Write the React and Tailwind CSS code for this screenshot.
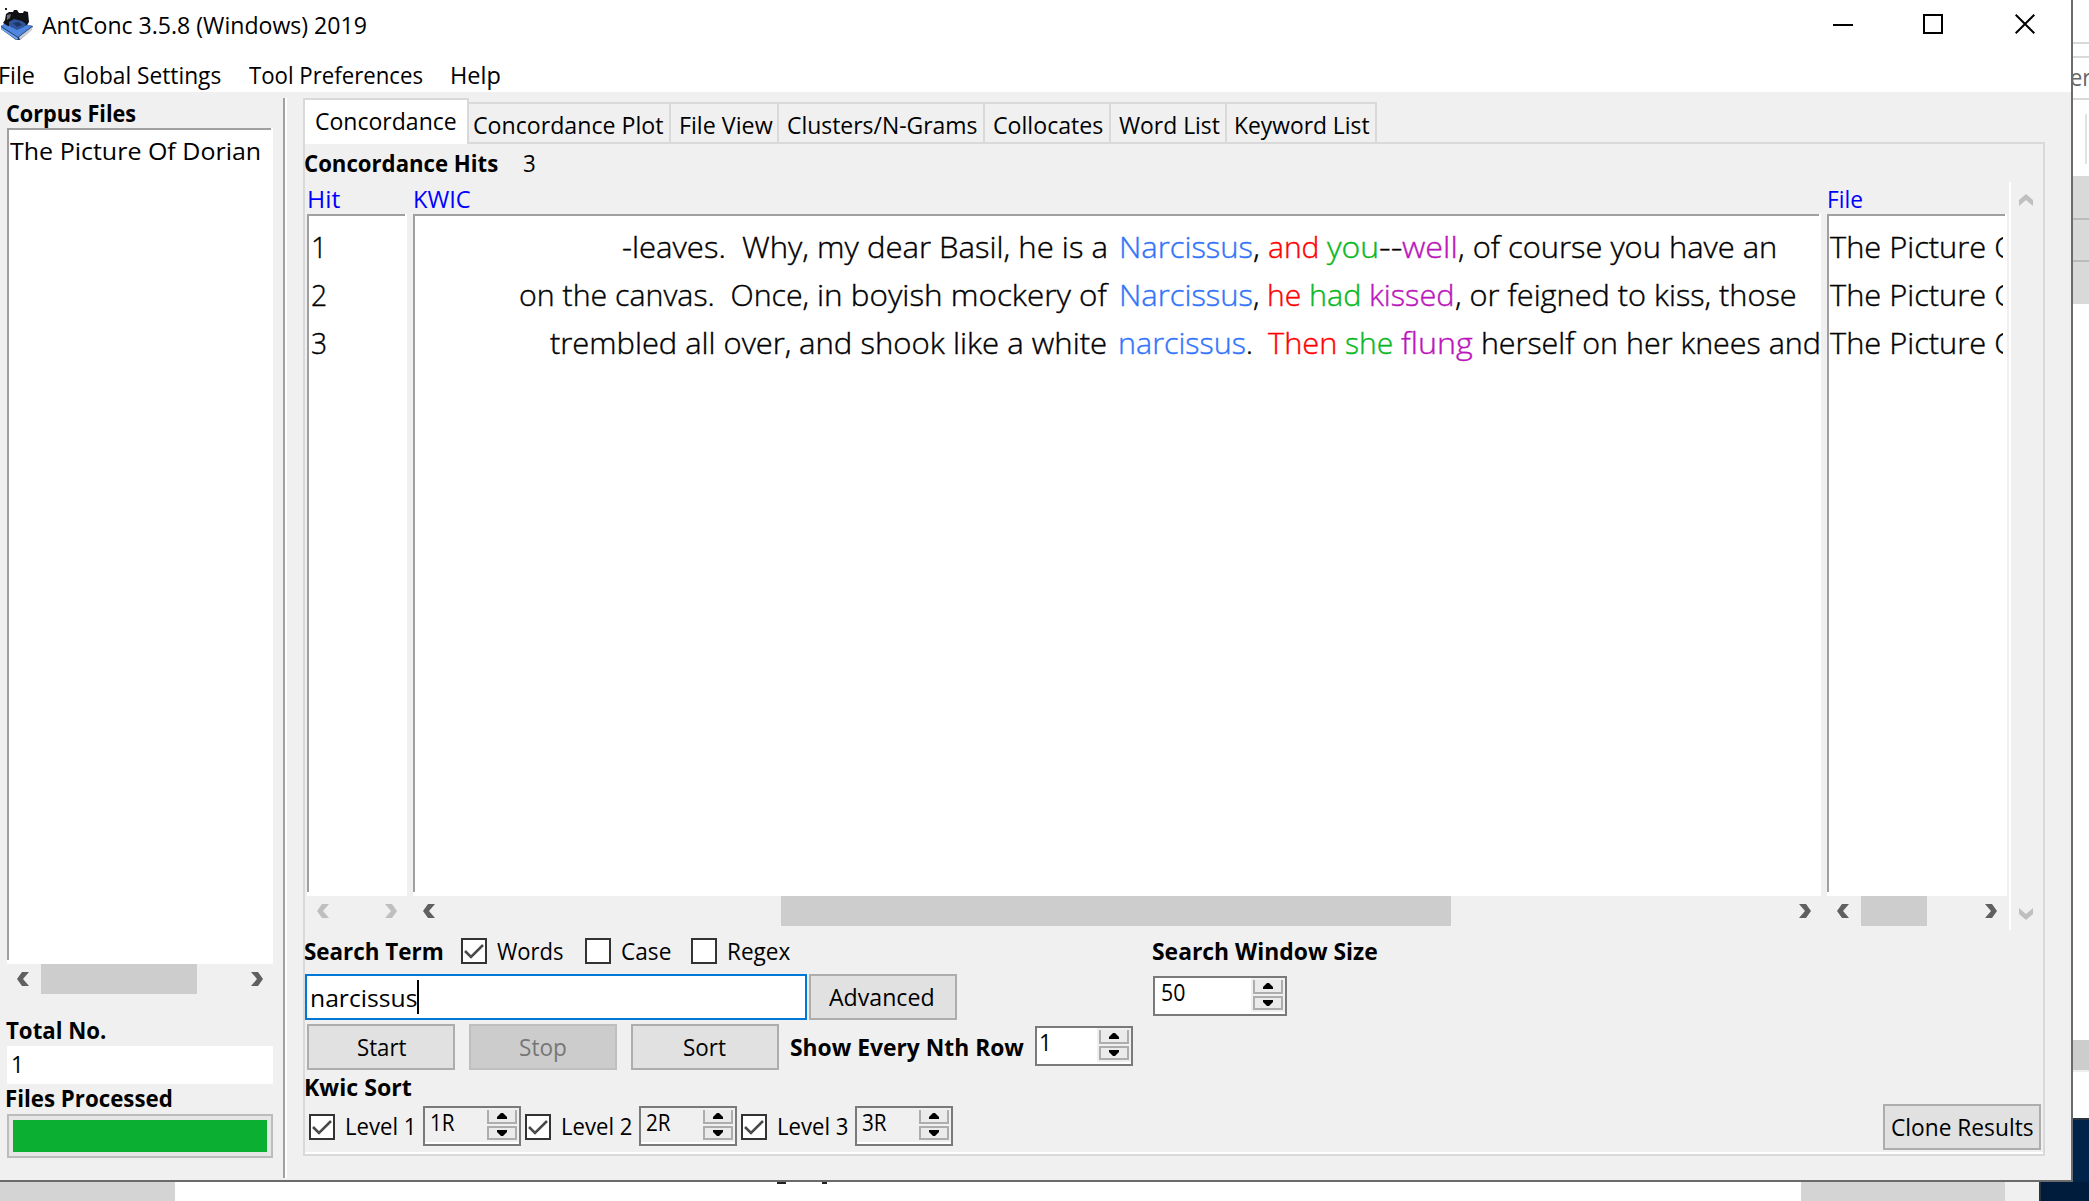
import React, { useLayoutEffect, useRef } from "react";

/* Text that condenses or widens itself to fill the width of its box. */
function Fit({ className = "", children }) {
  const outer = useRef(null);
  const inner = useRef(null);
  useLayoutEffect(() => {
    const o = outer.current.clientWidth;
    const i = inner.current.offsetWidth;
    if (i) inner.current.style.transform = `scaleX(${o / i})`;
  }, []);
  return (
    <span ref={outer} className={`block shrink-0 ${className}`}>
      <span ref={inner} className="inline-block origin-left whitespace-pre align-top">
        {children}
      </span>
    </span>
  );
}

const chevrons = {
  left: [12, 14, "5,0 12,0 6,7 12,14 5,14 0,7"],
  right: [12, 14, "7,0 0,0 6,7 0,14 7,14 12,7"],
  up: [14, 12, "0,6 7,0 14,6 14,12 7,6 0,12"],
  down: [14, 12, "0,6 7,12 14,6 14,0 7,6 0,0"],
};

function Chevron({ dir, off }) {
  const [w, h, points] = chevrons[dir];
  return (
    <svg width={w} height={h} viewBox={`0 0 ${w} ${h}`} className={off ? "shrink-0 fill-[#bfbfbf]" : "shrink-0 fill-[#606060]"}>
      <polygon points={points} />
    </svg>
  );
}

function HScroll({ off, thumb }) {
  return (
    <div className="flex h-[30px] items-center justify-between px-2.5">
      <Chevron dir="left" off={off} />
      {thumb && (
        <div className="flex h-full flex-1 px-3">
          <div className={`h-full bg-[#cdcdcd] ${thumb}`} />
        </div>
      )}
      <Chevron dir="right" off={off} />
    </div>
  );
}

function Sunken({ className = "", children }) {
  return (
    <div className="flex-1 bg-white pb-1 pr-0.5">
      <div className={`h-full overflow-hidden border-l-2 border-t-2 border-[#a0a0a0] ${className}`}>{children}</div>
    </div>
  );
}

function Column({ title, titleWidth, width, off, thumb, children }) {
  return (
    <div className={`flex h-[744px] flex-col ${width}`}>
      <Fit className={`h-8 leading-[34px] text-[#0000ff] ${titleWidth}`}>{title}</Fit>
      <Sunken className="pt-[7px] text-[30px] font-light leading-[48px] [-webkit-text-stroke:0.4px_currentColor]">{children}</Sunken>
      <HScroll off={off} thumb={thumb} />
    </div>
  );
}

function Check({ on, className = "" }) {
  return (
    <div className={`h-[26px] w-[26px] shrink-0 border-2 border-[#333333] bg-white ${className}`}>
      {on && (
        <svg width="22" height="22" viewBox="0 0 22 22">
          <path d="M2 11 L8 17 L20 5" fill="none" stroke="#4a4a4a" strokeWidth="2.6" />
        </svg>
      )}
    </div>
  );
}

function Button({ className = "", text, disabled, children }) {
  const tone = disabled ? "border-[#bfbfbf] bg-[#cccccc] text-[#777777]" : "border-[#adadad] bg-[#e1e1e1]";
  return (
    <div className={`flex h-[46px] shrink-0 items-center justify-center border-2 ${tone} ${className}`}>
      <Fit className={`h-8 leading-8 ${text}`}>{children}</Fit>
    </div>
  );
}

function Spinner({ className = "", text, readOnly, children }) {
  return (
    <div className={`flex h-10 shrink-0 justify-between border-2 border-[#7a7a7a] bg-white ${className}`}>
      <div className={`h-[34px] flex-1 pl-1.5 leading-[28px] ${readOnly ? "bg-[#f0f0f0]" : ""}`}>
        <Fit className={text}>{children}</Fit>
      </div>
      <div className="flex h-[34px] w-[34px] flex-col gap-0.5 bg-[#f0f0f0] px-0.5 pt-0.5">
        <div className="flex h-[14px] w-[30px] items-center justify-center border-2 border-t-0 border-[#adadad] bg-[#ebebeb]">
          <svg width="10" height="6" viewBox="0 0 10 6">
            <polygon points="4,0 6,0 10,4 10,6 0,6 0,4" />
          </svg>
        </div>
        <div className="flex h-[14px] w-[30px] items-center justify-center border-2 border-[#adadad] bg-[#ebebeb]">
          <svg width="10" height="6" viewBox="0 0 10 6">
            <polygon points="4,6 6,6 10,2 10,0 0,0 0,2" />
          </svg>
        </div>
      </div>
    </div>
  );
}

const tabs = [
  ["Concordance Plot", "w-[202px] pl-1", "w-[190px]"],
  ["File View", "w-[108px] pl-[8px]", "w-[94px]"],
  ["Clusters/N-Grams", "w-[206px] pl-[8px]", "w-[190px]"],
  ["Collocates", "w-[126px] pl-[8px]", "w-[110px]"],
  ["Word List", "w-[116px] pl-[8px]", "w-[101px]"],
  ["Keyword List", "w-[150px] pl-[7px]", "w-[136px]"],
];

const blue = "text-[#3374fa]";
const red = "text-[#ff0000]";
const green = "text-[#08b822]";
const purple = "text-[#bb16bb]";

const kwic = [
  {
    indent: "pl-[207px]",
    segments: [
      ["-leaves.  Why, my dear Basil, he is a", "w-[486px] mr-[11px]", ""],
      ["Narcissus", "w-[134px]", blue],
      [", ", "w-[15px]", ""],
      ["and ", "w-[59px]", red],
      ["you", "w-[52px]", green],
      ["--", "w-[23px]", ""],
      ["well", "w-[56px]", purple],
      [", of course you have an", "w-[319px]", ""],
    ],
  },
  {
    indent: "pl-[104px]",
    segments: [
      ["on the canvas.  Once, ", "w-[298px]", ""],
      ["in boyish mockery of", "w-[290px] mr-[12px]", ""],
      ["Narcissus", "w-[134px]", blue],
      [", ", "w-[14px]", ""],
      ["he ", "w-[42px]", red],
      ["had ", "w-[60px]", green],
      ["kissed", "w-[86px]", purple],
      [", or feigned to kiss, those", "w-[342px]", ""],
    ],
  },
  {
    indent: "pl-[135px]",
    segments: [
      ["trembled all over, ", "w-[249px]", ""],
      ["and shook like a white", "w-[308px] mr-[11px]", ""],
      ["narcissus", "w-[128px]", blue],
      [".  ", "w-[22px]", ""],
      ["Then ", "w-[77px]", red],
      ["she ", "w-[56px]", green],
      ["flung", "w-[72px]", purple],
      [" herself on her knees and", "w-[348px]", ""],
    ],
  },
];

function AppIcon() {
  return (
    <svg width="33" height="33" viewBox="0 0 33 33" className="shrink-0">
      <path d="M1 19 L10 14 L33 19 L31 23 L20 33 L16 33 L1 22 Z" fill="#24395e" />
      <path d="M1 19 L11 13 L32 19 L18 30 Z" fill="#4f86e0" />
      <path d="M1 20 L18 31 L17 33 L1 22 Z" fill="#6ea4f4" />
      <path d="M19 30 L32 20 L32 23 L20 33 Z" fill="#c4cbd6" />
      <path d="M5 1 H7 V3 H5 Z" fill="#222" />
      <path d="M6 7 L9 5 L13 5 L14 3 L17 3 L19 6 L23 6 L24 4 L28 5 L29 15 L27 18 L24 19 L8 19 L3 16 L5 13 Z" fill="#101114" />
      <path d="M9 15 L14 12 L22 14 L26 17 L24 20 L17 23 L9 19 Z" fill="#2f549c" />
      <path d="M13 16 L19 15 L22 18 L17 20 Z" fill="#1e3566" />
      <path d="M7 8 L11 7 L10 11 L7 13 Z" fill="#6b7074" />
    </svg>
  );
}

function TitleBar() {
  return (
    <div className="flex h-[50px] items-start pt-[7px]">
      <AppIcon />
      <Fit className="ml-[9px] mt-[2px] h-8 w-[325px] leading-8">AntConc 3.5.8 (Windows) 2019</Fit>
      <div className="ml-auto mr-9 mt-[7px] flex h-5 items-center">
        <div className="mt-0.5 h-0.5 w-5 bg-black" />
        <div className="ml-[70px] h-5 w-5 border-2 border-black" />
        <svg width="20" height="20" viewBox="0 0 20 20" className="ml-[72px]">
          <path d="M0.7 0.7 L19.3 19.3 M19.3 0.7 L0.7 19.3" stroke="#000" strokeWidth="2" />
        </svg>
      </div>
    </div>
  );
}

function MenuBar() {
  return (
    <div className="flex h-[42px] items-start pt-[9px] leading-8">
      <Fit className="-ml-[2px] w-[37px]">File</Fit>
      <Fit className="ml-[28px] w-[158px]">Global Settings</Fit>
      <Fit className="ml-[28px] w-[174px]">Tool Preferences</Fit>
      <Fit className="ml-[27px] w-[51px]">Help</Fit>
    </div>
  );
}

function CorpusPane() {
  return (
    <div className="flex w-[283px] shrink-0 flex-col pl-[7px] pr-[10px] pt-[5px]">
      <Fit className="-ml-px h-[31px] w-[130px] font-bold leading-8">Corpus Files</Fit>
      <div className="flex h-[836px] flex-col">
        <Sunken className="pl-px pt-[5px] leading-8">
          <Fit className="w-[251px]">The Picture Of Dorian</Fit>
        </Sunken>
      </div>
      <HScroll thumb="w-[156px]" />
      <Fit className="-ml-px mt-5 h-8 w-[100px] font-bold leading-8">Total No.</Fit>
      <div className="flex h-[38px] items-start bg-white pl-1 pt-[2px] leading-8">
        <Fit className="w-[13px]">1</Fit>
      </div>
      <Fit className="-ml-[2px] h-[30px] w-[168px] font-bold leading-[28px]">Files Processed</Fit>
      <div className="h-[44px] border-2 border-[#bcbcbc] bg-[#e6e6e6] p-1">
        <div className="h-full bg-[#0bb033]" />
      </div>
    </div>
  );
}

function Results() {
  return (
    <div className="flex h-[748px] pl-0.5">
      <div className="flex gap-1.5">
        <Column title="Hit" titleWidth="w-[33px]" width="w-[100px]" off>
          {["1", "2", "3"].map((n) => (
            <Fit key={n} className="ml-[2px] w-[16px]">
              {n}
            </Fit>
          ))}
        </Column>
        <Column title="KWIC" titleWidth="w-[58px]" width="w-[1408px]" thumb="ml-[334px] w-[670px]">
          {kwic.map((row, i) => (
            <div key={i} className={`flex ${row.indent}`}>
              {row.segments.map(([text, width, color], j) => (
                <Fit key={j} className={`${width} ${color}`}>
                  {text}
                </Fit>
              ))}
            </div>
          ))}
        </Column>
        <Column title="File" titleWidth="w-[36px]" width="w-[180px]" thumb="w-[66px]">
          <div className="w-[174px] overflow-hidden">
            {[0, 1, 2].map((n) => (
              <Fit key={n} className="ml-px w-[197px]">
                The Picture Of
              </Fit>
            ))}
          </div>
        </Column>
      </div>
      <div className="ml-0.5 w-0.5 bg-white" />
      <div className="flex w-8 flex-col justify-between pb-2.5 pl-2 pt-3">
        <Chevron dir="up" off />
        <Chevron dir="down" off />
      </div>
    </div>
  );
}

function SearchArea() {
  return (
    <div>
      <div className="mb-0.5 flex h-[42px] items-center leading-8">
        <Fit className="-ml-px -mt-px w-[140px] font-bold">Search Term</Fit>
        <Check on className="ml-[17px]" />
        <Fit className="-mt-px ml-[10px] w-[67px]">Words</Fit>
        <Check className="ml-[21px]" />
        <Fit className="-mt-px ml-[10px] w-[50px]">Case</Fit>
        <Check className="ml-[20px]" />
        <Fit className="-mt-px ml-[10px] w-[63px]">Regex</Fit>
        <Fit className="-mt-px ml-[362px] w-[226px] font-bold">Search Window Size</Fit>
      </div>
      <div className="flex">
        <div className="flex h-[46px] w-[502px] items-center border-2 border-[#0078d7] bg-white pl-[3px]">
          <Fit className="mt-[2px] h-8 w-[107px] leading-8">narcissus</Fit>
          <div className="h-[34px] w-0.5 bg-black" />
        </div>
        <Button className="ml-0.5 w-[148px]" text="-ml-0.5 w-[106px]">Advanced</Button>
        <Spinner className="ml-[196px] mt-0.5 w-[134px]" text="w-[24px]">50</Spinner>
      </div>
      <div className="mt-1 flex pl-0.5">
        <Button className="w-[148px]" text="w-[49px]">Start</Button>
        <Button className="ml-3.5 w-[148px]" text="w-[48px]" disabled>Stop</Button>
        <Button className="ml-3.5 w-[148px]" text="-ml-0.5 w-[43px]">Sort</Button>
        <Fit className="ml-[11px] mt-[7px] w-[234px] font-bold leading-8">Show Every Nth Row</Fit>
        <Spinner className="ml-[11px] mt-0.5 w-[98px]" text="-ml-1 w-[13px]">1</Spinner>
      </div>
      <Fit className="-ml-px h-[34px] w-[108px] font-bold leading-[34px]">Kwic Sort</Fit>
      <div className="flex h-[46px] pl-1 leading-8">
        {["1", "2", "3"].map((n) => (
          <div key={n} className="mr-1 flex w-[212px]">
            <Check on className="mt-2.5" />
            <Fit className="ml-[10px] mt-1.5 w-[71px]">{`Level ${n}`}</Fit>
            <Spinner className="ml-[7px] mt-0.5 w-[98px]" text="-ml-px w-[25px]" readOnly>{`${n}R`}</Spinner>
          </div>
        ))}
        <Button className="ml-auto mr-0.5 w-[158px]" text="w-[143px]">Clone Results</Button>
      </div>
    </div>
  );
}

function Notebook() {
  return (
    <div className="ml-4 mt-1.5 h-[1058px] w-[1742px] shrink-0">
      <div className="flex h-[46px] items-end">
        <div className="h-[46px] w-[166px] border-2 border-b-0 border-[#d9d9d9] bg-white pl-[10px] pt-[5px]">
          <Fit className="w-[142px] leading-8">Concordance</Fit>
        </div>
        {tabs.map(([label, box, width]) => (
          <div key={label} className={`h-[42px] border-b-2 border-r-2 border-t-2 border-[#d9d9d9] pt-[5px] ${box}`}>
            <Fit className={`leading-8 ${width}`}>{label}</Fit>
          </div>
        ))}
        <div className="h-0.5 flex-1 bg-[#d9d9d9]" />
      </div>
      <div className="h-[1012px] border-2 border-t-0 border-[#d9d9d9]">
        <div className="h-full border-b-2 border-white">
          <div className="flex h-[38px] leading-[38px]">
            <Fit className="-ml-px w-[194px] font-bold">Concordance Hits</Fit>
            <Fit className="ml-[25px] w-[13px]">3</Fit>
          </div>
          <Results />
          <SearchArea />
        </div>
      </div>
    </div>
  );
}

/* Slice of the windows that lie behind, to the right of the main window. */
function RightStrip() {
  return (
    <div className="flex w-4 flex-col overflow-hidden">
      <div className="h-0.5 mt-[42px] shrink-0 bg-[#d9d9d9]" />
      <div className="mt-3 h-0.5 shrink-0 bg-[#d9d9d9]" />
      <div className="h-10 shrink-0 overflow-hidden leading-[38px] text-[#666666]">
        <Fit className="-ml-[3px] w-[21px]">er</Fit>
      </div>
      <div className="h-0.5 shrink-0 bg-[#d9d9d9]" />
      <div className="mr-0.5 mt-3.5 h-[50px] shrink-0 border-r-2 border-[#e1e1e1]" />
      <div className="mt-3 h-[42px] shrink-0 bg-[#d9d9d9]" />
      <div className="h-[42px] shrink-0 border-t-2 border-[#bbbbbb] bg-[#d9d9d9]" />
      <div className="h-[44px] shrink-0 border-t-2 border-[#bbbbbb] bg-[#d9d9d9]" />
      <div className="mt-[736px] h-8 shrink-0 border-b-2 border-[#eeeeee] bg-[#cdcdcd]" />
      <div className="mt-[46px] flex-1 border-t-2 border-[#2a3440] bg-[#00234a]" />
    </div>
  );
}

function BottomStrip() {
  return (
    <div className="flex h-[19px]">
      <div className="w-[175px] bg-[#d4d4d4]" />
      <div className="flex flex-1">
        <div className="ml-[602px] h-0.5 w-[9px] bg-[#222222]" />
        <div className="ml-[36px] h-0.5 w-[5px] bg-[#222222]" />
      </div>
      <div className="w-[204px] bg-[#d4d4d4]" />
      <div className="w-[34px] bg-[#f0f0f0]" />
      <div className="w-[50px] border-l-2 border-[#2a3440] bg-[#001c3d]" />
    </div>
  );
}

export default function App() {
  return (
    <div className="h-[1201px] w-[2089px] overflow-hidden bg-white font-['Open_Sans','Noto_Sans',sans-serif] text-[24px] text-black">
      <div className="flex h-[1182px]">
        <div className="w-[2073px] shrink-0 overflow-hidden border-b-2 border-r-2 border-[#6b6b6b] bg-white">
          <TitleBar />
          <MenuBar />
          <div className="flex h-[1088px] bg-[#f0f0f0]">
            <CorpusPane />
            <div className="mt-1.5 h-[1080px] w-1 shrink-0 border-l-2 border-r-2 border-l-[#a0a0a0] border-r-white" />
            <Notebook />
          </div>
        </div>
        <RightStrip />
      </div>
      <BottomStrip />
    </div>
  );
}
